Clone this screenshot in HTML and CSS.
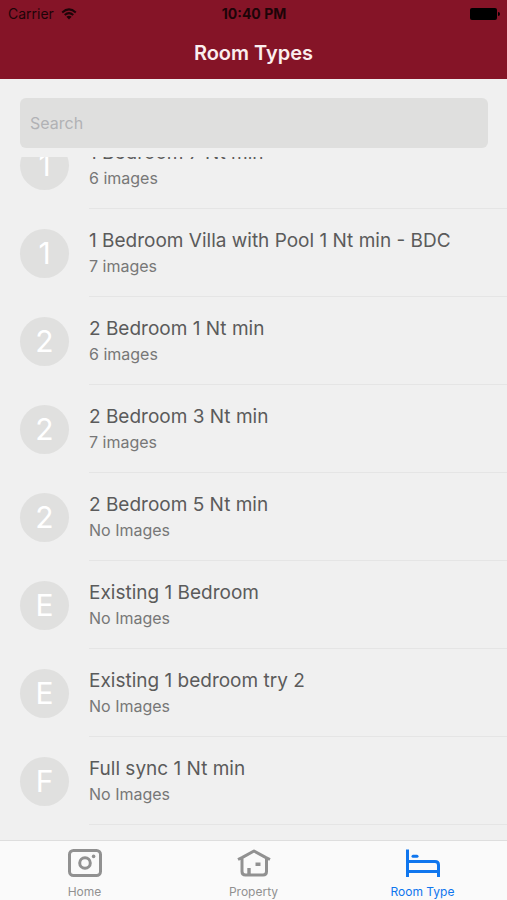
FILE: index.html
```html
<!DOCTYPE html>
<html lang="en">
<head>
<meta charset="utf-8">
<meta name="viewport" content="width=device-width, initial-scale=1">
<title>Room Types</title>
<link rel="stylesheet" href="styles.css">
</head>
<body>
<header class="header">
  <div class="status">
    <div class="carrier">
      <span>Carrier</span>
      <svg width="16" height="12" viewBox="0 0 16 12" aria-hidden="true">
        <path d="M1.2 4.4Q8 -1.6 14.8 4.4M3.7 7Q8 3.2 12.3 7" fill="none" stroke="currentColor" stroke-width="2"/>
        <path d="M5.4 8.8Q8 6.6 10.6 8.8L8 11.5z" fill="currentColor"/>
      </svg>
    </div>
    <time class="clock">10:40 PM</time>
    <svg class="battery" width="30" height="12" viewBox="0 0 30 12" aria-hidden="true">
      <rect width="27" height="12" rx="2"/>
      <path d="M28 4q2 0 2 2t-2 2z"/>
    </svg>
  </div>
  <h1 class="title">Room Types</h1>
</header>
<div class="search">
  <input class="search-input" type="search" placeholder="Search" aria-label="Search">
</div>
<main class="list">
  <ul class="rooms">
    <li class="room"><span class="avatar">1</span><div class="info"><h2 class="name">1 Bedroom 7 Nt min</h2><p class="count">6 images</p></div></li>
    <li class="room"><span class="avatar">1</span><div class="info"><h2 class="name">1 Bedroom Villa with Pool 1 Nt min - BDC</h2><p class="count">7 images</p></div></li>
    <li class="room"><span class="avatar">2</span><div class="info"><h2 class="name">2 Bedroom 1 Nt min</h2><p class="count">6 images</p></div></li>
    <li class="room"><span class="avatar">2</span><div class="info"><h2 class="name">2 Bedroom 3 Nt min</h2><p class="count">7 images</p></div></li>
    <li class="room"><span class="avatar">2</span><div class="info"><h2 class="name">2 Bedroom 5 Nt min</h2><p class="count">No Images</p></div></li>
    <li class="room"><span class="avatar">E</span><div class="info"><h2 class="name">Existing 1 Bedroom</h2><p class="count">No Images</p></div></li>
    <li class="room"><span class="avatar">E</span><div class="info"><h2 class="name">Existing 1 bedroom try 2</h2><p class="count">No Images</p></div></li>
    <li class="room"><span class="avatar">F</span><div class="info"><h2 class="name">Full sync 1 Nt min</h2><p class="count">No Images</p></div></li>
  </ul>
</main>
<nav class="tabs">
  <a class="tab" href="#home">
    <svg width="34" height="28" viewBox="0 0 34 28" fill="none" stroke="currentColor" aria-hidden="true">
      <rect x="1.5" y="1.5" width="31" height="25" rx="4" stroke-width="3"/>
      <circle cx="17" cy="14" r="5.3" stroke-width="3"/>
      <circle cx="25.6" cy="7.4" r="1.8" fill="currentColor" stroke="none"/>
    </svg>
    <span>Home</span>
  </a>
  <a class="tab" href="#property">
    <svg width="34" height="28" viewBox="0 0 34 28" fill="none" stroke="currentColor" stroke-width="3" stroke-linejoin="round" aria-hidden="true">
      <path d="M1 10.5L5 8.6L17 2L29 8.6L33 10.5M5 9V22.5Q5 26 8.5 26H26Q29.5 26 29.5 22.5V9"/>
      <path d="M12 26V19M18.5 15.3H23.5" stroke-width="3.4"/>
    </svg>
    <span>Property</span>
  </a>
  <a class="tab active" href="#room-type" aria-current="page">
    <svg width="34" height="28" viewBox="0 0 34 28" fill="none" stroke="currentColor" stroke-width="3" aria-hidden="true">
      <path d="M1.5 .5V28M1.5 12.5H29Q32.5 12.5 32.5 16V28M1.5 22.5H32.5"/>
      <path d="M7 7.3H11" stroke-linecap="round"/>
    </svg>
    <span>Room Type</span>
  </a>
</nav>
</body>
</html>
```
FILE: styles.css
```css
* {
  box-sizing: border-box;
}

body {
  margin: 0;
  height: 100vh;
  display: flex;
  flex-direction: column;
  background: #f0f0f0;
  color: #5b5b5b;
  font-family: Inter, "Liberation Sans", sans-serif;
}

h1, h2, p, ul {
  margin: 0;
  padding: 0;
  font-weight: 400;
}

.header {
  flex: none;
  background: #851427;
}

.status {
  display: grid;
  grid-template-columns: 1fr auto 1fr;
  align-items: center;
  padding: 0 7px 0 8px;
  color: #1d0408;
  font-size: 14px;
  line-height: 27px;
}

.carrier {
  display: flex;
  align-items: center;
  gap: 7px;
}

.clock {
  font-weight: 700;
}

.battery {
  justify-self: end;
  fill: #000;
}

.title {
  color: #fbeeee;
  font-size: 20px;
  font-weight: 600;
  line-height: 52px;
  text-align: center;
}

.search {
  flex: none;
  padding: 19px 19px 9px 20px;
}

.search-input {
  display: block;
  width: 100%;
  height: 50px;
  padding: 0 10px;
  border: 0;
  border-radius: 6px;
  background: #dfdfde;
  color: #5b5b5b;
  font: inherit;
  font-size: 16px;
  appearance: none;
}

.search-input::placeholder {
  color: #b1b2b5;
}

.list {
  flex: 1;
  min-height: 0;
  overflow: hidden;
}

/* The list is scrolled part of the way through its first row. */
.rooms {
  margin-top: -36px;
  list-style: none;
}

.room {
  display: flex;
  align-items: center;
  gap: 20px;
  padding-left: 20px;
}

.avatar {
  flex: none;
  width: 49px;
  height: 49px;
  border-radius: 50%;
  background: #e0e0df;
  color: #fff;
  font-size: 30px;
  line-height: 49px;
  text-align: center;
}

.info {
  flex: 1;
  min-width: 0;
  padding: 19px 0 18px;
  border-bottom: 1px solid #e5e5e5;
}

.name {
  font-size: 19px;
  line-height: 26px;
}

.count {
  color: #777;
  font-size: 16px;
  line-height: 24px;
}

.tabs {
  flex: none;
  display: grid;
  grid-template-columns: repeat(3, 1fr);
  border-top: 1px solid #dedede;
  background: #fafafa;
}

.tab {
  display: flex;
  flex-direction: column;
  align-items: center;
  gap: 7px;
  padding: 8px 0 0;
  color: #919191;
  font-size: 12px;
  line-height: 16px;
  text-decoration: none;
}

.active {
  color: #0f76ee;
}
```
